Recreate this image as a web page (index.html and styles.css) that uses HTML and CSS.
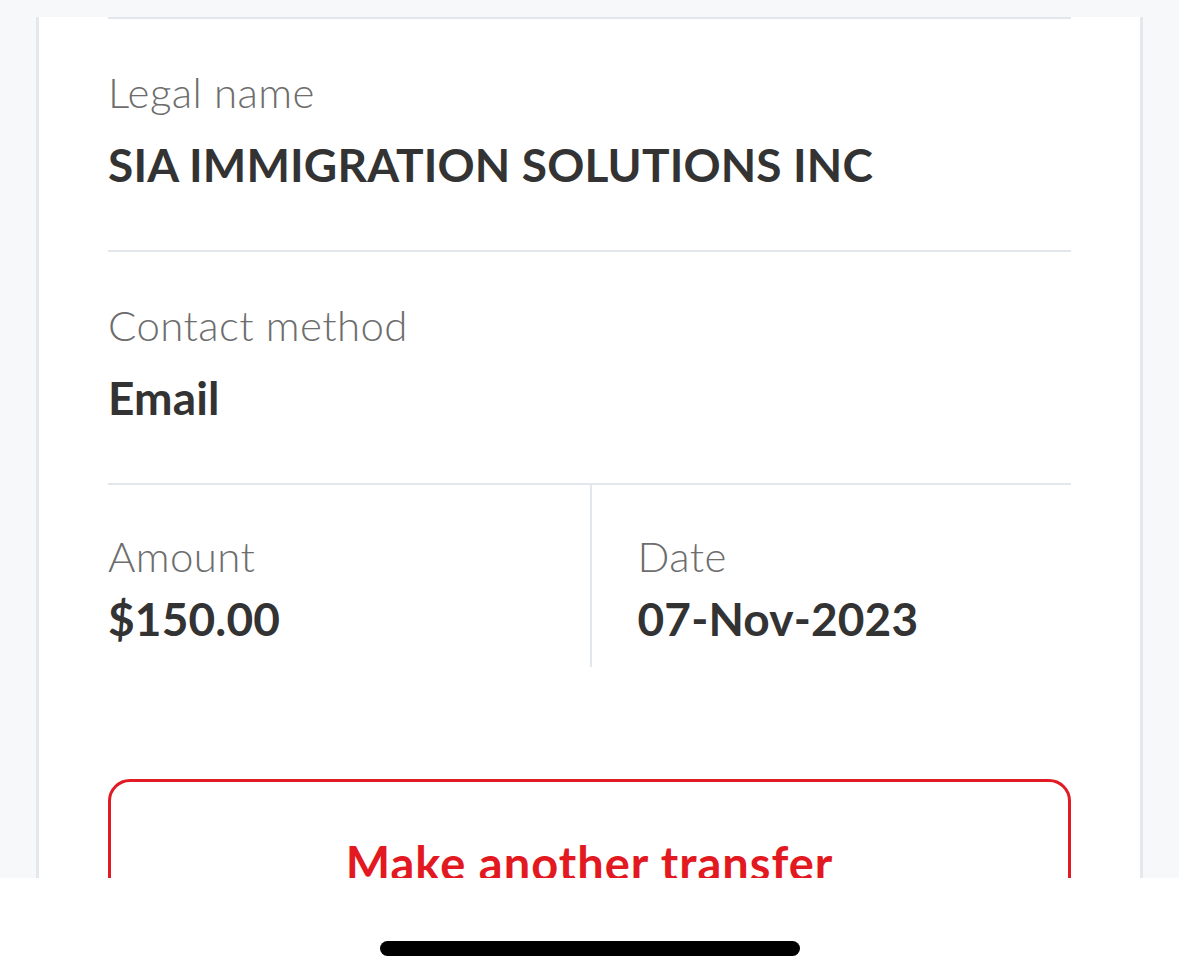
FILE: index.html
```html
<!DOCTYPE html>
<html lang="en">
<head>
    <meta charset="UTF-8">
    <meta name="viewport" content="width=device-width, initial-scale=1.0">
    <title>Transfer details</title>
    <link rel="stylesheet" href="styles.css">
</head>
<body>
    <div class="card">
        <div class="top-rule"></div>

        <div class="field">
            <div class="field-label">Legal name</div>
            <div class="field-value">SIA IMMIGRATION SOLUTIONS INC</div>
        </div>

        <div class="field">
            <div class="field-label">Contact method</div>
            <div class="field-value">Email</div>
        </div>

        <div class="field-pair">
            <div class="field-cell">
                <div class="field-label">Amount</div>
                <div class="field-value">$150.00</div>
            </div>
            <div class="field-cell field-cell-right">
                <div class="field-label">Date</div>
                <div class="field-value">07-Nov-2023</div>
            </div>
        </div>

        <button type="button" class="outline-button">Make another transfer</button>
    </div>

    <div class="home-bar">
        <div class="home-indicator"></div>
    </div>
</body>
</html>
```

FILE: styles.css
```css
body {
    font-family: Lato, "Open Sans", sans-serif;
    background-color: #f7f8fa;
    margin: 0;
    padding: 0;
    height: 980px;
    overflow: hidden;
}

.card {
    margin: 0 36px;
    padding: 0 69px;
    background-color: #fff;
    border-left: 3px solid #e4e7ec;
    border-right: 3px solid #e4e7ec;
    min-height: 980px;
    box-sizing: border-box;
}

.top-rule {
    height: 2px;
    margin-top: 17px;
    background-color: #e2e7ed;
}

.field {
    padding: 48px 0 57px;
    border-bottom: 2px solid #e2e7ed;
}

.field-label {
    font-size: 42px;
    line-height: 50px;
    letter-spacing: 0.4px;
    font-weight: 300;
    color: #6d6d6d;
}

.field-value {
    margin-top: 20px;
    font-size: 46px;
    line-height: 56px;
    font-weight: 700;
    letter-spacing: 0.15px;
    color: #333;
}

.field-pair {
    display: grid;
    grid-template-columns: 1fr 1fr;
}

.field-cell {
    padding: 46px 0 20px;
}

.field-cell .field-value {
    margin-top: 10px;
}

.field-cell-right {
    padding-left: 46px;
    border-left: 2px solid #e2e7ed;
}

.outline-button {
    display: block;
    width: 100%;
    margin-top: 112px;
    padding: 53px 0 60px;
    background-color: #fff;
    border: 3px solid #e01b24;
    border-radius: 22px;
    font-family: inherit;
    font-size: 47px;
    line-height: 56px;
    font-weight: 700;
    letter-spacing: 1px;
    color: #e31921;
    cursor: pointer;
}

.home-bar {
    position: fixed;
    left: 0;
    right: 0;
    bottom: 0;
    height: 102px;
    background-color: #fff;
}

.home-indicator {
    width: 420px;
    height: 15px;
    margin: 63px auto 0;
    background-color: #000;
    border-radius: 8px;
}
```
